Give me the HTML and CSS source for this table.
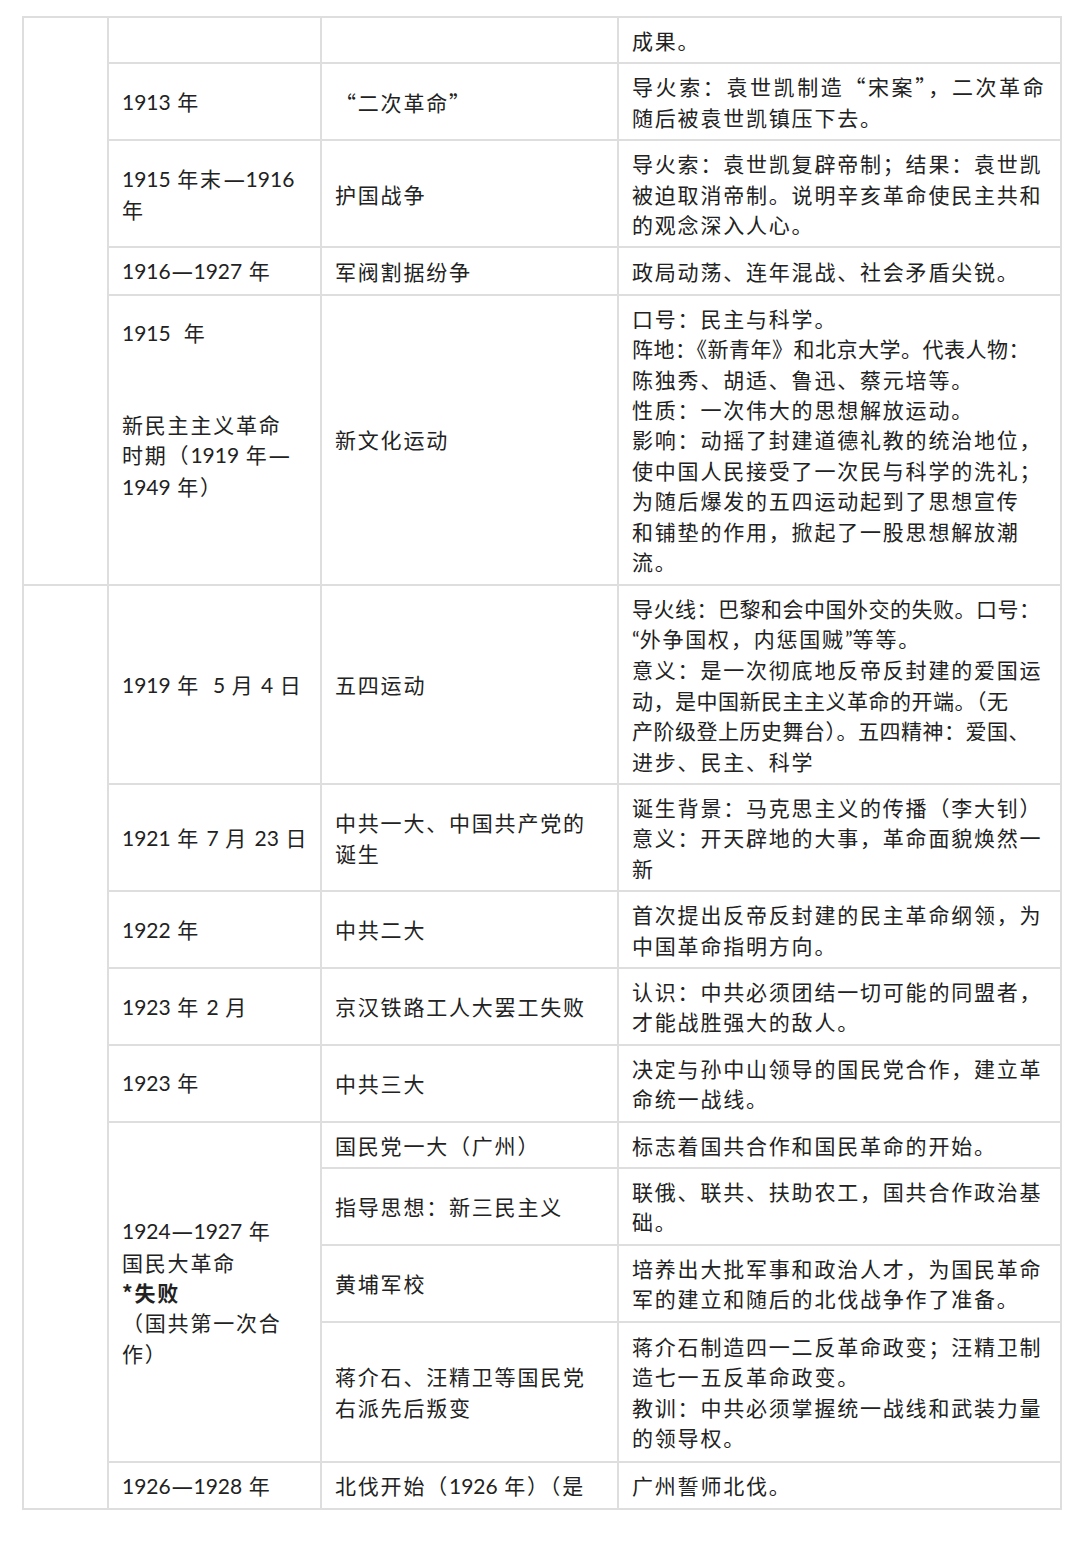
FILE: index.html
```html
<!DOCTYPE html>
<html lang="zh-CN">
<head>
<meta charset="utf-8">
<title>历史年表</title>
<link rel="stylesheet" href="styles.css">
</head>
<body>
<table class="chart">
  <colgroup>
    <col class="c1"><col class="c2"><col class="c3"><col class="c4">
  </colgroup>
  <tbody>
    <tr>
      <td class="era" rowspan="5"></td>
      <td></td>
      <td></td>
      <td>成果。</td>
    </tr>
    <tr>
      <td><span class="n">1913</span> 年</td>
      <td class="quoted">“二次革命”</td>
      <td><span class="wide">导火索：袁世凯制造“宋案”，二次革命</span><br>随后被袁世凯镇压下去。</td>
    </tr>
    <tr>
      <td><span class="n">1915</span> 年末<span class="dash">—</span><span class="n">1916</span><br>年</td>
      <td>护国战争</td>
      <td>导火索：袁世凯复辟帝制；结果：袁世凯<br>被迫取消帝制。说明辛亥革命使民主共和<br>的观念深入人心。</td>
    </tr>
    <tr>
      <td><span class="n">1916</span><span class="dash">—</span><span class="n">1927</span> 年</td>
      <td>军阀割据纷争</td>
      <td>政局动荡、连年混战、社会矛盾尖锐。</td>
    </tr>
    <tr>
      <td><span class="n">1915</span>&nbsp; 年<br><br><br>新民主主义革命<br>时期（<span class="n">1919</span> 年<span class="dash">—</span><br><span class="n">1949</span> 年）<br><br><br></td>
      <td>新文化运动</td>
      <td>口号：民主与科学。<br><span class="t19">阵地：《新青年》和北京大学。代表人物：</span><br>陈独秀、胡适、鲁迅、蔡元培等。<br>性质：一次伟大的思想解放运动。<br>影响：动摇了封建道德礼教的统治地位，<br>使中国人民接受了一次民与科学的洗礼；<br>为随后爆发的五四运动起到了思想宣传<br>和铺垫的作用，掀起了一股思想解放潮<br>流。</td>
    </tr>
    <tr>
      <td class="era" rowspan="10"></td>
      <td><span class="n">1919</span> 年&nbsp; <span class="n">5</span> 月 <span class="n">4</span> 日</td>
      <td>五四运动</td>
      <td><span class="t19">导火线：巴黎和会中国外交的失败。口号：</span><br><span class="n">“</span>外争国权，内惩国贼<span class="n">”</span>等等。<br>意义：是一次彻底地反帝反封建的爱国运<br><span class="t19">动，是中国新民主主义革命的开端。（无</span><br><span class="t19">产阶级登上历史舞台）。五四精神：爱国、</span><br>进步、民主、科学</td>
    </tr>
    <tr>
      <td><span class="n">1921</span> 年 <span class="n">7</span> 月 <span class="n">23</span> 日</td>
      <td>中共一大、中国共产党的<br>诞生</td>
      <td>诞生背景：马克思主义的传播（李大钊）<br>意义：开天辟地的大事，革命面貌焕然一<br>新</td>
    </tr>
    <tr>
      <td><span class="n">1922</span> 年</td>
      <td>中共二大</td>
      <td>首次提出反帝反封建的民主革命纲领，为<br>中国革命指明方向。</td>
    </tr>
    <tr>
      <td><span class="n">1923</span> 年 <span class="n">2</span> 月</td>
      <td>京汉铁路工人大罢工失败</td>
      <td>认识：中共必须团结一切可能的同盟者，<br>才能战胜强大的敌人。</td>
    </tr>
    <tr>
      <td><span class="n">1923</span> 年</td>
      <td>中共三大</td>
      <td>决定与孙中山领导的国民党合作，建立革<br>命统一战线。</td>
    </tr>
    <tr>
      <td rowspan="4"><span class="n">1924</span><span class="dash">—</span><span class="n">1927</span> 年<br>国民大革命<br><strong class="bold">*失败</strong><br>（国共第一次合<br>作）</td>
      <td>国民党一大（广州）</td>
      <td>标志着国共合作和国民革命的开始。</td>
    </tr>
    <tr>
      <td>指导思想：新三民主义</td>
      <td>联俄、联共、扶助农工，国共合作政治基<br>础。</td>
    </tr>
    <tr>
      <td>黄埔军校</td>
      <td>培养出大批军事和政治人才，为国民革命<br>军的建立和随后的北伐战争作了准备。</td>
    </tr>
    <tr class="tall">
      <td>蒋介石、汪精卫等国民党<br>右派先后叛变</td>
      <td>蒋介石制造四一二反革命政变；汪精卫制<br>造七一五反革命政变。<br>教训：中共必须掌握统一战线和武装力量<br>的领导权。</td>
    </tr>
    <tr>
      <td><span class="n">1926</span><span class="dash">—</span><span class="n">1928</span> 年</td>
      <td>北伐开始（<span class="n">1926</span> 年）（是</td>
      <td>广州誓师北伐。</td>
    </tr>
  </tbody>
</table>
</body>
</html>
```

FILE: styles.css
```css
html, body {
  margin: 0;
  padding: 0;
  background: #ffffff;
}

body {
  padding: 16px 0 0 22px;
  font-family: "Noto Sans CJK SC", "Noto Sans", sans-serif;
  color: #222222;
}

.chart {
  border-collapse: collapse;
  table-layout: fixed;
  width: 1038px;
  font-size: 21px;
  line-height: 30.4px;
  letter-spacing: 1.8px;
}

.c1 { width: 85px; }
.c2 { width: 213px; }
.c3 { width: 297px; }
.c4 { width: 443px; }

.chart td {
  border: 2px solid #dedede;
  padding: 7px 12px 7px 13px;
  vertical-align: middle;
  white-space: nowrap;
}

.n {
  font-family: "Lato", "Liberation Sans", sans-serif;
  letter-spacing: 0;
  font-size: 21px;
}

.dash {
  display: inline-block;
  font-family: "Lato", "Liberation Sans", sans-serif;
  font-weight: 700;
  letter-spacing: 0;
  transform: scaleX(1.35);
  margin: 0 3px;
}

.t19 {
  letter-spacing: 0.5px;
}

.wide {
  letter-spacing: 2.6px;
}

.bold {
  font-weight: 700;
}

.tall td {
  height: 124px;
}
```
